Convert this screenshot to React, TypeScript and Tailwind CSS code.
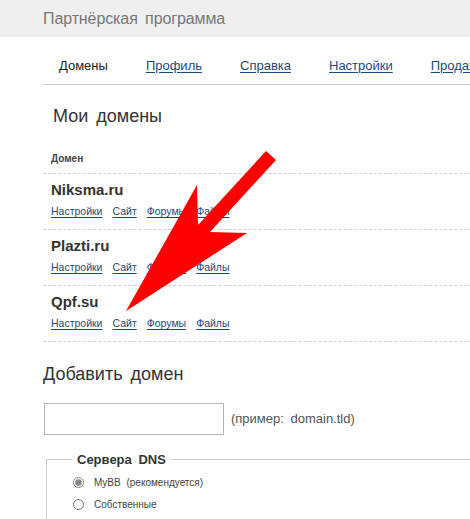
import React from "react"

const domains = ["Niksma.ru", "Plazti.ru", "Qpf.su"]
const actions = ["Настройки", "Сайт", "Форумы", "Файлы"]
const nav = ["Профиль", "Справка", "Настройки", "Продажа доменов"]

const linkCls = "text-[#1d4a7c] underline underline-offset-2"

export default function App() {
  return (
    <div className="relative w-[470px] h-[519px] overflow-hidden bg-white font-['Liberation_Sans',Arial,sans-serif] text-[#333]">
      <div className="h-[37px] bg-[#efefef] pl-[43px] pt-[7px] text-[16px] tracking-[-0.1px] text-[#777] [word-spacing:3px]">
        Партнёрская программа
      </div>

      <div className="ml-[43px] w-[700px]">
        <div className="flex h-[48px] items-center gap-[38px] border-b border-[#cfcfcf] pl-[16px] pt-[10px] text-[13px] whitespace-nowrap">
          <span className="text-[#222]">Домены</span>
          {nav.map((n) => (
            <a key={n} href="#" className={linkCls}>
              {n}
            </a>
          ))}
        </div>

        <h1 className="pl-[10px] pt-[20px] text-[18px] text-[#333] leading-[22px] [word-spacing:3px]">
          Мои домены
        </h1>

        <div className="pl-[8px] pt-[25px] pb-[7px] text-[10px] font-bold text-[#444] leading-[14px]">
          Домен
        </div>

        {domains.map((d) => (
          <div key={d} className="border-t border-dashed border-[#d0d0d0] pl-[8px] pt-[7px] pb-[11px]">
            <div className="text-[15px] font-bold leading-[18px] text-[#333]">{d}</div>
            <div className="mt-[6px] flex gap-[10px] text-[10.5px] leading-[13px]">
              {actions.map((a) => (
                <a key={a} href="#" className={linkCls}>
                  {a}
                </a>
              ))}
            </div>
          </div>
        ))}
        <div className="border-t border-dashed border-[#d0d0d0]" />

        <h2 className="pt-[21px] text-[18px] leading-[22px] text-[#333] [word-spacing:3px]">
          Добавить домен
        </h2>

        <div className="mt-[18px] flex items-center gap-[7px]">
          <input
            type="text"
            className="ml-[1px] h-[32px] w-[180px] border border-[#b5b5b5] bg-white outline-none"
          />
          <span className="text-[13px] text-[#555] [word-spacing:3px]">(пример: domain.tld)</span>
        </div>

        <fieldset className="ml-[3px] mt-[15px] h-[120px] border border-[#cfcfcf] pl-[26px]">
          <legend className="px-[5px] -ml-[1px] text-[13px] font-bold text-[#333] [word-spacing:3px]">
            Сервера DNS
          </legend>
          <label className="mt-[5px] flex items-center gap-[10px] text-[10px] text-[#444] [word-spacing:3px]">
            <input type="radio" name="dns" defaultChecked className="m-0 h-[11px] w-[11px] accent-[#888]" />
            MyBB (рекомендуется)
          </label>
          <label className="mt-[7px] flex items-center gap-[10px] text-[10px] text-[#444]">
            <input type="radio" name="dns" className="m-0 h-[11px] w-[11px]" />
            Собственные
          </label>
        </fieldset>
      </div>

      <svg className="pointer-events-none absolute left-0 top-0" width="470" height="519" viewBox="0 0 470 519">
        <polygon
          points="266,151 276,160 210,232 247,233 126,311 197,185 198,225"
          fill="#ff0000"
        />
      </svg>
    </div>
  )
}
